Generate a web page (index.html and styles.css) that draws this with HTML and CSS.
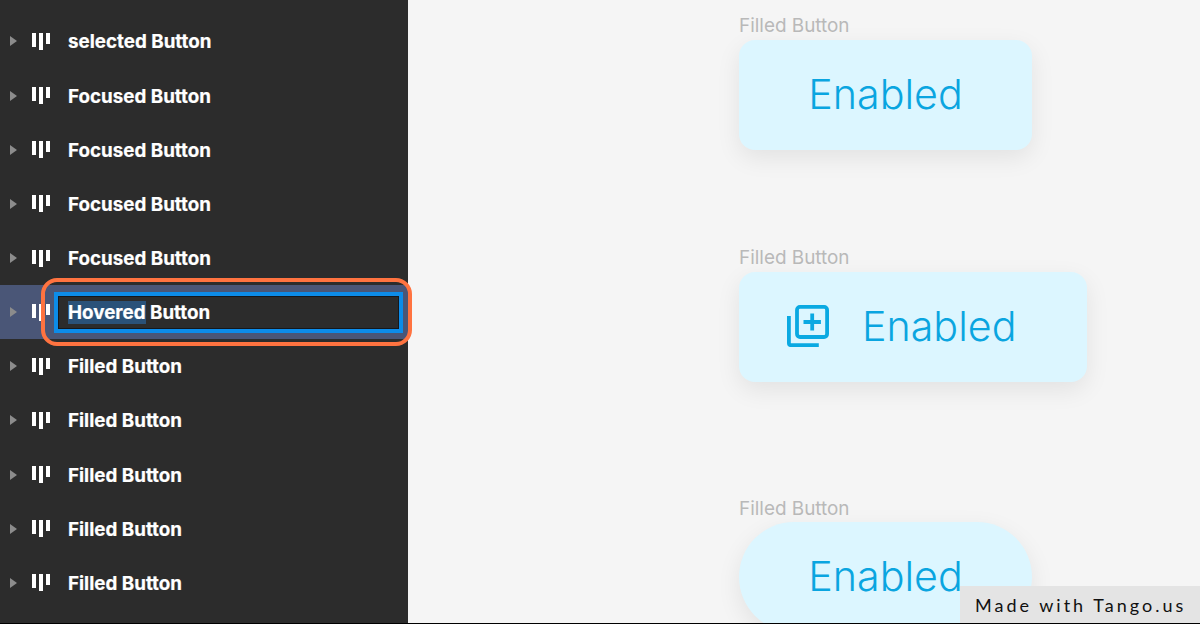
FILE: index.html
```html
<!DOCTYPE html>
<html>
<head>
	<title>Filled Button</title>
	<meta charset="utf-8">
	<link rel="stylesheet" href="styles.css">
</head>
<body>
	<div class="page">
		<div class="sidebar">
			<div class="row"><span class="arrow"></span><span class="comp"><i class="b1"></i><i class="b2"></i><i class="b3"></i></span><span class="name">selected Button</span></div>
			<div class="row"><span class="arrow"></span><span class="comp"><i class="b1"></i><i class="b2"></i><i class="b3"></i></span><span class="name">Focused Button</span></div>
			<div class="row"><span class="arrow"></span><span class="comp"><i class="b1"></i><i class="b2"></i><i class="b3"></i></span><span class="name">Focused Button</span></div>
			<div class="row"><span class="arrow"></span><span class="comp"><i class="b1"></i><i class="b2"></i><i class="b3"></i></span><span class="name">Focused Button</span></div>
			<div class="row"><span class="arrow"></span><span class="comp"><i class="b1"></i><i class="b2"></i><i class="b3"></i></span><span class="name">Focused Button</span></div>
			<div class="row hovered">
				<span class="arrow"></span><span class="comp"><i class="b1"></i><i class="b2"></i><i class="b3"></i></span>
				<div class="highlight"></div>
				<div class="edit"><span class="sel">Hovered</span> Button</div>
			</div>
			<div class="row"><span class="arrow"></span><span class="comp"><i class="b1"></i><i class="b2"></i><i class="b3"></i></span><span class="name">Filled Button</span></div>
			<div class="row"><span class="arrow"></span><span class="comp"><i class="b1"></i><i class="b2"></i><i class="b3"></i></span><span class="name">Filled Button</span></div>
			<div class="row"><span class="arrow"></span><span class="comp"><i class="b1"></i><i class="b2"></i><i class="b3"></i></span><span class="name">Filled Button</span></div>
			<div class="row"><span class="arrow"></span><span class="comp"><i class="b1"></i><i class="b2"></i><i class="b3"></i></span><span class="name">Filled Button</span></div>
			<div class="row"><span class="arrow"></span><span class="comp"><i class="b1"></i><i class="b2"></i><i class="b3"></i></span><span class="name">Filled Button</span></div>
		</div>
		<div class="main">
			<div class="group first">
				<div class="label">Filled Button</div>
				<div class="btn">Enabled</div>
			</div>
			<div class="group second">
				<div class="label">Filled Button</div>
				<div class="btn with-icon">
					<svg class="icon" width="42" height="42" viewBox="0 0 42 42" fill="none" stroke="#0aa9e2" stroke-width="3.8">
						<path d="M1.9 11v27a2.2 2.2 0 0 0 2.2 2.2h27.7"/>
						<rect x="10" y="1.9" width="30.1" height="30.1" rx="3"/>
						<path d="M25.2 8.5v17M16.5 17h17.4"/>
					</svg>
					Enabled
				</div>
			</div>
			<div class="group third">
				<div class="label">Filled Button</div>
				<div class="btn pill">Enabled</div>
			</div>
		</div>
		<div class="tango">Made with Tango.us</div>
	</div>
</body>
</html>
```

FILE: styles.css
```css
*{
	margin:0;
	padding:0;
	box-sizing:border-box;
}
body{
	font-family:"Inter","Liberation Sans",sans-serif;
	background:#f5f5f5;
}
.page{
	position:relative;
	display:flex;
	width:1200px;
	height:624px;
	overflow:hidden;
	border-bottom:1px solid #000;
}
.sidebar{
	width:408px;
	height:624px;
	flex:none;
	padding-top:14.4px;
	background:#2c2c2c;
}
.row{
	position:relative;
	display:flex;
	align-items:center;
	height:54.15px;
	padding-left:10px;
	color:#fff;
	font-size:18.8px;
	font-weight:700;
	-webkit-text-stroke:0.2px #fff;
}
.row.hovered{
	background:#4a5677;
}
.name{
	padding-top:1px;
}
.arrow{
	width:0;
	height:0;
	border-left:7px solid #8c8c8c;
	border-top:5px solid transparent;
	border-bottom:5px solid transparent;
}
.comp{
	display:flex;
	align-items:flex-start;
	gap:3px;
	width:18px;
	height:17px;
	margin-left:15px;
	margin-right:18px;
}
.comp i{
	display:block;
	width:4px;
	background:#fff;
}
.comp .b1{ height:14px; }
.comp .b2{ height:17px; }
.comp .b3{ height:11px; }
.highlight{
	position:absolute;
	left:41px;
	top:-7px;
	width:371px;
	height:68px;
	border:4px solid #ff7340;
	border-radius:16px;
}
.edit{
	position:absolute;
	left:54px;
	top:7px;
	width:349px;
	height:41px;
	padding-left:10px;
	line-height:33px;
	background:#2c2c2c;
	border:4px solid #0d8ce9;
	outline:1px solid #14181d;
	outline-offset:-5px;
}
.sel{
	display:inline-block;
	height:23px;
	line-height:23px;
	background:#2a5279;
}
.main{
	flex:1;
	padding-left:331px;
}
.group{
	display:flex;
	flex-direction:column;
	align-items:flex-start;
}
.first{ margin-top:16px; }
.second{ margin-top:98px; }
.third{ margin-top:117px; }
.third .label{ margin-bottom:3px; }
.label{
	height:20px;
	margin-bottom:4px;
	font-size:18.9px;
	line-height:20px;
	color:#b9b9b9;
}
.btn{
	display:flex;
	align-items:center;
	justify-content:center;
	width:293px;
	height:110px;
	flex:none;
	padding-bottom:3px;
	border-radius:16px;
	background:#dcf6ff;
	color:#0aa5e0;
	font-size:41.2px;
	font-weight:350;
	box-shadow:0 8px 24px rgba(0,0,0,0.08);
}
.with-icon{
	justify-content:flex-start;
	width:348px;
	padding-left:48px;
	gap:33px;
}
.pill{
	border-radius:55px;
}
.tango{
	position:absolute;
	right:0;
	bottom:-1px;
	width:240px;
	height:38px;
	padding-left:15px;
	background:#e4e4e4;
	color:#111;
	font-family:"Lato","Liberation Sans",sans-serif;
	font-size:18px;
	letter-spacing:3px;
	line-height:38px;
	white-space:nowrap;
}
```
